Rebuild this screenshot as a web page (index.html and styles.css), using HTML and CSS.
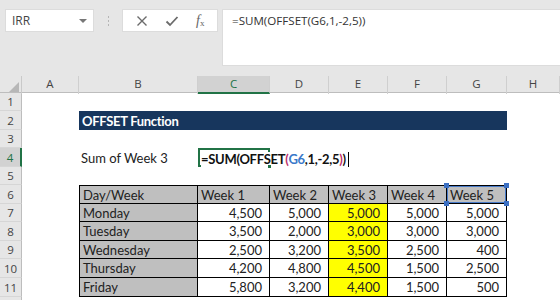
FILE: index.html
```html
<!DOCTYPE html>
<html>
<head>
<meta charset="utf-8">
<link rel="stylesheet" href="styles.css">
</head>
<body>
<div class="app">
  <div class="toolbar">
    <div class="namebox"><span class="name">IRR</span><span class="caret"></span></div>
    <div class="grip"><i></i><i></i><i></i></div>
    <div class="fxbtns">
      <svg class="ic" width="12" height="12" viewBox="0 0 12 12"><path d="M1.5 1.5 L10.5 10.5 M10.5 1.5 L1.5 10.5" stroke="#6b6b6b" stroke-width="1.4" fill="none"/></svg>
      <svg class="ic" width="14" height="12" viewBox="0 0 14 12"><path d="M1.5 6.5 L5 10 L12.5 2" stroke="#6b6b6b" stroke-width="1.8" fill="none"/></svg>
      <span class="fx"><i>f</i><sub>x</sub></span>
    </div>
    <div class="formula">=SUM(OFFSET(G6,1,-2,5))</div>
  </div>
  <div class="sheet">
    <div class="row hdr">
      <div class="corner"><span class="tri"></span></div>
      <div class="ch">A</div><div class="ch">B</div><div class="ch sel">C</div><div class="ch">D</div><div class="ch">E</div><div class="ch">F</div><div class="ch">G</div><div class="ch">H</div>
    </div>
    <div class="row r18"><div class="rh">1</div></div>
    <div class="row r19"><div class="rh">2</div><div></div><div class="title">OFFSET Function</div></div>
    <div class="row r18"><div class="rh">3</div></div>
    <div class="row r19"><div class="rh sel">4</div><div></div><div class="lbl">Sum of Week 3</div>
      <div class="active"><span class="edit">=SUM(OFFSET<span class="p1">(</span><span class="ref">G6</span>,1,-2,5<span class="p1">)</span>)<span class="cur"></span></span><span class="handle"></span></div>
    </div>
    <div class="row r18"><div class="rh">5</div></div>
    <div class="row r19"><div class="rh">6</div><div></div>
      <div class="t g top lft">Day/Week</div><div class="t g top">Week 1</div><div class="t g top">Week 2</div><div class="t g top">Week 3</div><div class="t g top">Week 4</div><div class="t g top refsel">Week 5<i class="h tl"></i><i class="h tr"></i><i class="h bl"></i><i class="h br"></i></div>
    </div>
    <div class="row r18"><div class="rh">7</div><div></div>
      <div class="t g lft">Monday</div><div class="t n">4,500</div><div class="t n">5,000</div><div class="t n y">5,000</div><div class="t n">5,000</div><div class="t n">5,000</div>
    </div>
    <div class="row r19"><div class="rh">8</div><div></div>
      <div class="t g lft">Tuesday</div><div class="t n">3,500</div><div class="t n">2,000</div><div class="t n y">3,000</div><div class="t n">3,000</div><div class="t n">3,000</div>
    </div>
    <div class="row r18"><div class="rh">9</div><div></div>
      <div class="t g lft">Wednesday</div><div class="t n">2,500</div><div class="t n">3,200</div><div class="t n y">3,500</div><div class="t n">2,500</div><div class="t n">400</div>
    </div>
    <div class="row r19"><div class="rh">10</div><div></div>
      <div class="t g lft">Thursday</div><div class="t n">4,200</div><div class="t n">4,800</div><div class="t n y">4,500</div><div class="t n">1,500</div><div class="t n">2,500</div>
    </div>
    <div class="row r19"><div class="rh">11</div><div></div>
      <div class="t g lft">Friday</div><div class="t n">5,800</div><div class="t n">3,200</div><div class="t n y">4,400</div><div class="t n">1,500</div><div class="t n">500</div>
    </div>
    <div class="row r19"><div class="rh"></div></div>
  </div>
</div>
</body>
</html>
```

FILE: styles.css
```css
* { box-sizing: border-box; }
html, body { margin: 0; padding: 0; }
body { width: 560px; height: 300px; overflow: hidden; background: #fff; }
.app { width: 560px; height: 300px; overflow: hidden; background: #fff; font-family: "Lato", "Liberation Sans", sans-serif; }

.toolbar { height: 76px; background: #e6e6e6; display: flex; align-items: flex-start; padding: 9px 0 0 5px; }
.namebox { width: 89px; height: 23px; background: #fff; border: 1px solid #dcdcdc; display: flex; align-items: center; justify-content: space-between; padding: 0 6px 0 6px; }
.name { font-family: "Open Sans", sans-serif; font-size: 12px; color: #444; }
.caret { width: 0; height: 0; border-left: 4px solid transparent; border-right: 4px solid transparent; border-top: 4px solid #777; }
.grip { width: 28px; height: 23px; display: flex; flex-direction: column; align-items: center; justify-content: center; gap: 2px; }
.grip i { display: block; width: 1px; height: 2px; background: #b5b5b5; }
.fxbtns { width: 96px; height: 23px; background: #fff; border: 1px solid #dcdcdc; display: flex; align-items: center; justify-content: space-around; padding: 0 4px; }
.ic { display: block; }
.fx { font-family: "Liberation Serif", serif; font-size: 14px; color: #666; line-height: 1; }
.fx sub { font-size: 9px; vertical-align: -1px; }
.formula { margin-left: 4px; flex: 1; height: 57px; background: #fff; border: 1px solid #dcdcdc; border-right: none; padding: 3px 0 0 9px; font-family: "Open Sans", sans-serif; font-size: 11.6px; color: #333; }

.sheet { display: flex; flex-direction: column; }
.row { display: grid; grid-template-columns: 22px 57px 119px 72px 59px 59px 59px 60px 1fr; }
.r18 { height: 18px; }
.r19 { height: 19px; }
.hdr { height: 17px; background: #e6e6e6; border-bottom: 1px solid #bdbdbd; }
.corner { position: relative; border-right: 1px solid #c9c9c9; }
.tri { position: absolute; right: 2px; bottom: 2px; width: 0; height: 0; border-left: 10px solid transparent; border-bottom: 10px solid #b7b7b7; }
.ch { font-family: "Open Sans", sans-serif; font-size: 11.5px; color: #444; text-align: center; line-height: 16px; border-right: 1px solid #cfcfcf; }
.ch.sel { background: #d2d2d2; border-bottom: 2px solid #217346; color: #217346; }
.rh { background: #e6e6e6; border-right: 1px solid #bdbdbd; border-bottom: 1px solid #d6d6d6; font-family: "Open Sans", sans-serif; font-size: 11.5px; color: #444; text-align: center; display: flex; align-items: center; justify-content: center; }
.rh.sel { background: #d2d2d2; border-right: 2px solid #217346; color: #217346; }

.title { grid-column: span 6; background: #17365d; color: #fff; font-weight: bold; font-size: 13px; letter-spacing: -0.3px; padding-left: 3px; display: flex; align-items: center; }
.lbl { font-size: 13px; color: #222; padding-left: 2px; display: flex; align-items: center; }
.active { position: relative; border: 2px solid #217346; }
.edit { position: absolute; left: 1px; top: 2px; background: #fff; font-weight: bold; font-size: 13px; letter-spacing: -0.3px; color: #111; white-space: nowrap; line-height: 13px; padding-right: 3px; display: flex; align-items: center; }
.p1 { color: #c0306a; }
.ref { color: #3a78c9; }
.cur { display: inline-block; width: 1px; height: 15px; background: #000; margin-left: 2px; }
.handle { position: absolute; right: -4px; bottom: -4px; width: 5px; height: 5px; background: #217346; border: 1px solid #fff; }

.t { border-right: 1px solid #000; border-bottom: 1px solid #000; font-size: 13px; color: #222; display: flex; align-items: center; white-space: nowrap; overflow: hidden; }
.t.top { border-top: 1px solid #000; }
.t.lft { border-left: 1px solid #000; }
.t.g { background: #bfbfbf; padding-left: 3px; }
.t.n { justify-content: flex-end; padding-right: 7px; background: #fff; }
.t.y { background: #ffff00; }
.refsel { position: relative; overflow: visible; box-shadow: inset 0 0 0 1px #4a7cc9; }
.h { position: absolute; width: 5px; height: 5px; background: #3b6fc2; }
.h.tl { left: -3px; top: -3px; }
.h.tr { right: -3px; top: -3px; }
.h.bl { left: -3px; bottom: -3px; }
.h.br { right: -3px; bottom: -3px; }
```
